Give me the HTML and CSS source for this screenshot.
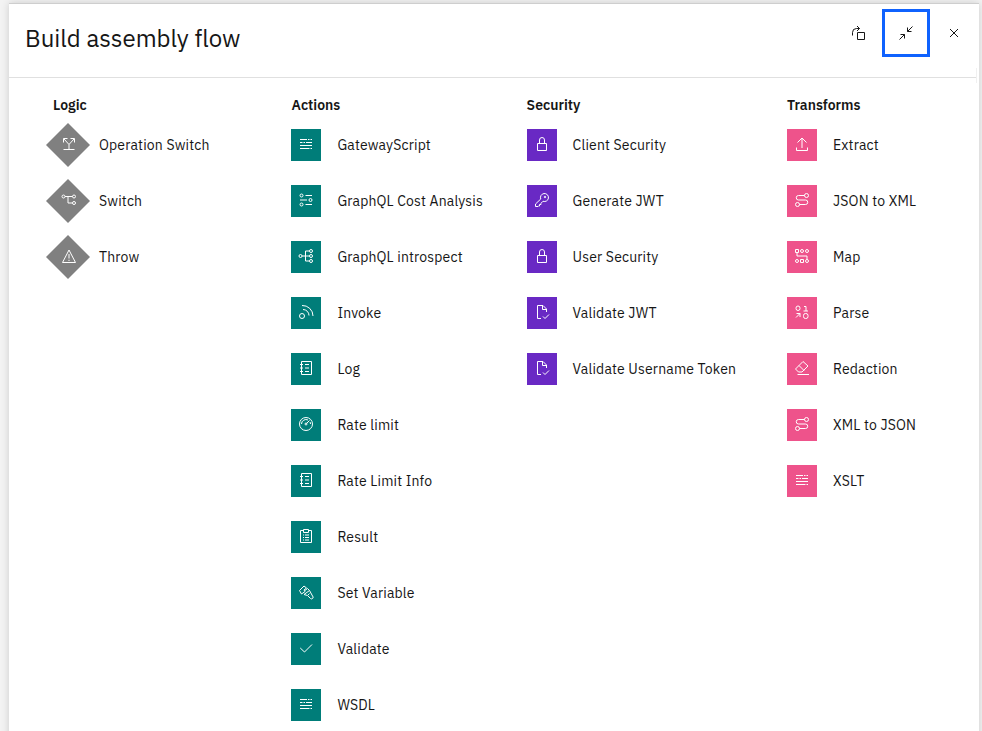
FILE: index.html
```html
<!DOCTYPE html>
<html lang="en">
<head>
<meta charset="utf-8">
<title>Build assembly flow</title>
<link rel="stylesheet" href="styles.css">
</head>
<body>
<svg class="sprite" aria-hidden="true">
  <symbol id="split" viewBox="0 0 32 32"><path d="M5 27h22M16 27V17L6 6M16 17L26 6M5 13V5h8M19 5h8v8"/></symbol>
  <symbol id="branch" viewBox="0 0 32 32"><circle cx="5" cy="9" r="3"/><circle cx="26" cy="9" r="3"/><circle cx="26" cy="22" r="3"/><path d="M8 9h15M14 9v13h9"/></symbol>
  <symbol id="warning" viewBox="0 0 32 32"><path d="M16 4L29 29H3ZM16 12v9M16 23.5v2.5"/></symbol>
  <symbol id="script" viewBox="0 0 32 32"><path d="M4 7h14M20 7h3M25 7h3M4 13h5M11 13h3M16 13h12M4 19h24M4 25h19M25 25h3"/></symbol>
  <symbol id="cost" viewBox="0 0 32 32"><circle cx="7" cy="7" r="3"/><circle cx="25" cy="16" r="3"/><circle cx="7" cy="25" r="3"/><path d="M15 7h13M4 16h14M15 25h13"/></symbol>
  <symbol id="tree" viewBox="0 0 32 32"><circle cx="5" cy="16" r="3"/><circle cx="26" cy="6" r="3"/><circle cx="26" cy="16" r="3"/><circle cx="26" cy="26" r="3"/><path d="M8 16h15M23 6h-8v20h8"/></symbol>
  <symbol id="invoke" viewBox="0 0 32 32"><circle cx="8" cy="24" r="5"/><path d="M10 11a12 12 0 0 1 12 12M8 3a21 21 0 0 1 22 21"/></symbol>
  <symbol id="log" viewBox="0 0 32 32"><path d="M7 3h20v26H7ZM4 9h6M4 16h6M4 23h6M14 9h8M14 16h8M14 23h8"/></symbol>
  <symbol id="meter" viewBox="0 0 32 32"><circle cx="16" cy="16" r="13"/><path d="M7 16a9 9 0 0 1 13-8M24 12a9 9 0 0 1 1 4M17 15l6-6"/><circle cx="16" cy="16" r="2"/></symbol>
  <symbol id="result" viewBox="0 0 32 32"><path d="M11 5H5v24h22V5h-6M11 3h10v6H11ZM10 14h2M14 14h8M10 19h2M14 19h8M10 24h2M14 24h8"/></symbol>
  <symbol id="tools" viewBox="0 0 32 32"><path d="M3 13L12 4l5 4-5 4 2 3-7 5ZM14 13l5-4 4 4 6 11a3 3 0 0 1-4 5l-6-6-7-2 11-8M20 22l3-3"/></symbol>
  <symbol id="check" viewBox="0 0 32 32"><path d="M4.5 16l8.500 8L28 9"/></symbol>
  <symbol id="lock" viewBox="0 0 32 32"><path d="M7 15h18v14H7ZM11 15V8a5 5 0 0 1 10 0v7"/></symbol>
  <symbol id="key" viewBox="0 0 32 32"><path d="M13.500 14A8 8 0 1 1 18 18.500L14 22.500V25h-3v3H9l-1 1H3v-5Z"/><circle cx="22" cy="10" r="1.500"/></symbol>
  <symbol id="document" viewBox="0 0 32 32"><path d="M14 29H7V3h11l7 7v6M17 3v8h8M18 25l4 4 8-8"/></symbol>
  <symbol id="upload" viewBox="0 0 32 32"><path d="M5 23v6h22v-6M16 24V4M7 13l9-9 9 9"/></symbol>
  <symbol id="route" viewBox="0 0 32 32"><circle cx="25" cy="7" r="4"/><circle cx="7" cy="25" r="4"/><path d="M21 7H9a4.500 4.500 0 0 0 0 9h14a4.500 4.500 0 0 1 0 9H11"/></symbol>
  <symbol id="map" viewBox="0 0 32 32"><path d="M3 3h6v6H3ZM13 23h6v6h-6ZM6 9v7h20v7"/><circle cx="16" cy="6" r="3"/><circle cx="26" cy="6" r="3"/><circle cx="6" cy="26" r="3"/><circle cx="26" cy="26" r="3"/></symbol>
  <symbol id="parse" viewBox="0 0 32 32"><rect x="4" y="4" width="8" height="9" rx="4"/><rect x="19" y="19" width="9" height="10" rx="4"/><path d="M20 5h4v9M19 14h9M4 27l8-8M5 19h7v7"/></symbol>
  <symbol id="eraser" viewBox="0 0 32 32"><path d="M7 29h23M18 3l10 9-12 12H9l-6-6ZM10 11l10 10"/></symbol>
  <symbol id="popout" viewBox="0 0 32 32"><path d="M15 15h14v14H15ZM5 21v-6a8 8 0 0 1 8-8h6M14 2l5 5-5 5"/></symbol>
  <symbol id="minimize" viewBox="0 0 32 32"><path d="M3 29l10-10M5 19h8v8M29 3L19 13M19 5v8h8"/></symbol>
  <symbol id="close" viewBox="0 0 32 32"><path d="M8 8l16 16M24 8L8 24"/></symbol>
</svg>

<main class="panel">
  <header class="header">
    <h1>Build assembly flow</h1>
    <div class="controls">
      <button aria-label="Pop out"><svg><use href="#popout"/></svg></button>
      <button class="focused" aria-label="Collapse"><svg><use href="#minimize"/></svg></button>
      <button aria-label="Close"><svg><use href="#close"/></svg></button>
    </div>
  </header>

  <div class="palette">
    <section class="logic">
      <h2>Logic</h2>
      <ul>
        <li><i><svg><use href="#split"/></svg></i><span>Operation Switch</span></li>
        <li><i><svg><use href="#branch"/></svg></i><span>Switch</span></li>
        <li><i><svg><use href="#warning"/></svg></i><span>Throw</span></li>
      </ul>
    </section>
    <section class="actions">
      <h2>Actions</h2>
      <ul>
        <li><i><svg><use href="#script"/></svg></i><span>GatewayScript</span></li>
        <li><i><svg><use href="#cost"/></svg></i><span>GraphQL Cost Analysis</span></li>
        <li><i><svg><use href="#tree"/></svg></i><span>GraphQL introspect</span></li>
        <li><i><svg><use href="#invoke"/></svg></i><span>Invoke</span></li>
        <li><i><svg><use href="#log"/></svg></i><span>Log</span></li>
        <li><i><svg><use href="#meter"/></svg></i><span>Rate limit</span></li>
        <li><i><svg><use href="#log"/></svg></i><span>Rate Limit Info</span></li>
        <li><i><svg><use href="#result"/></svg></i><span>Result</span></li>
        <li><i><svg><use href="#tools"/></svg></i><span>Set Variable</span></li>
        <li><i><svg><use href="#check"/></svg></i><span>Validate</span></li>
        <li><i><svg><use href="#script"/></svg></i><span>WSDL</span></li>
      </ul>
    </section>
    <section class="security">
      <h2>Security</h2>
      <ul>
        <li><i><svg><use href="#lock"/></svg></i><span>Client Security</span></li>
        <li><i><svg><use href="#key"/></svg></i><span>Generate JWT</span></li>
        <li><i><svg><use href="#lock"/></svg></i><span>User Security</span></li>
        <li><i><svg><use href="#document"/></svg></i><span>Validate JWT</span></li>
        <li><i><svg><use href="#document"/></svg></i><span>Validate Username Token</span></li>
      </ul>
    </section>
    <section class="transforms">
      <h2>Transforms</h2>
      <ul>
        <li><i><svg><use href="#upload"/></svg></i><span>Extract</span></li>
        <li><i><svg><use href="#route"/></svg></i><span>JSON to XML</span></li>
        <li><i><svg><use href="#map"/></svg></i><span>Map</span></li>
        <li><i><svg><use href="#parse"/></svg></i><span>Parse</span></li>
        <li><i><svg><use href="#eraser"/></svg></i><span>Redaction</span></li>
        <li><i><svg><use href="#route"/></svg></i><span>XML to JSON</span></li>
        <li><i><svg><use href="#script"/></svg></i><span>XSLT</span></li>
      </ul>
    </section>
  </div>
</main>
</body>
</html>
```
FILE: styles.css
```css
* { box-sizing: border-box; }
body {
  margin: 0;
  height: 731px;
  overflow: hidden;
  padding: 3px 3px 0 9px;
  background: #f3f3f3;
  color: #161616;
  font: 14px/18px "IBM Plex Sans", Roboto, sans-serif;
  letter-spacing: 0.16px;
}
.sprite { display: none; }
.panel {
  height: 740px;
  background: #fff;
  border-top: 1px solid #cecece;
  box-shadow: 0 0 8px rgba(0, 0, 0, 0.16);
}
.header {
  position: relative;
  display: flex;
  justify-content: space-between;
  height: 74px;
  margin-right: 3px;
  padding: 5px 0 0 16px;
  border-bottom: 1px solid #e0e0e0;
}
.header::after {
  content: "";
  position: absolute;
  right: -1px;
  bottom: -6px;
  width: 1px;
  height: 15px;
  background: #f0f0f0;
}
h1 {
  margin: 13px 0 0;
  font-size: 24px;
  line-height: 32px;
  font-weight: 400;
  letter-spacing: 0;
}
.controls { display: flex; margin-right: -2px; }
button {
  display: grid;
  place-items: center;
  width: 48px;
  height: 48px;
  padding: 0;
  border: 0;
  background: none;
  color: #161616;
}
.focused { border: 3px solid #0f62fe; }
svg {
  display: block;
  width: 16px;
  height: 16px;
  fill: none;
  stroke: currentColor;
  stroke-width: 2;
}
.palette {
  display: grid;
  grid-template-columns: 245px 236px 260px 1fr;
  padding: 18px 0 0 37px;
}
h2 {
  margin: 0;
  font-size: 14px;
  line-height: 18px;
  font-weight: 600;
  letter-spacing: 0;
}
ul {
  display: flex;
  flex-direction: column;
  gap: 24px;
  margin: 15px 0 0;
  padding: 0;
  list-style: none;
}
li {
  display: flex;
  align-items: center;
  gap: 16px;
  height: 32px;
  white-space: nowrap;
}
i {
  display: grid;
  place-items: center;
  flex: none;
  width: 30px;
  height: 32px;
  padding-bottom: 2px;
  color: #fff;
}
.logic h2 { padding-left: 7px; }
.logic li { gap: 9px; }
.logic i {
  width: 44px;
  height: 44px;
  padding-left: 1px;
  background: #808080;
  clip-path: polygon(50% 0, 100% 50%, 50% 100%, 0 50%);
}
.actions h2 { padding-left: 0.5px; }
.actions li { gap: 16.4px; }
.security li { gap: 15.6px; }
.security h2 { margin-left: -0.4px; }
.actions i { background: #007d79; }
.security i { background: #6929c4; }
.transforms i { background: #ee538b; }
```
